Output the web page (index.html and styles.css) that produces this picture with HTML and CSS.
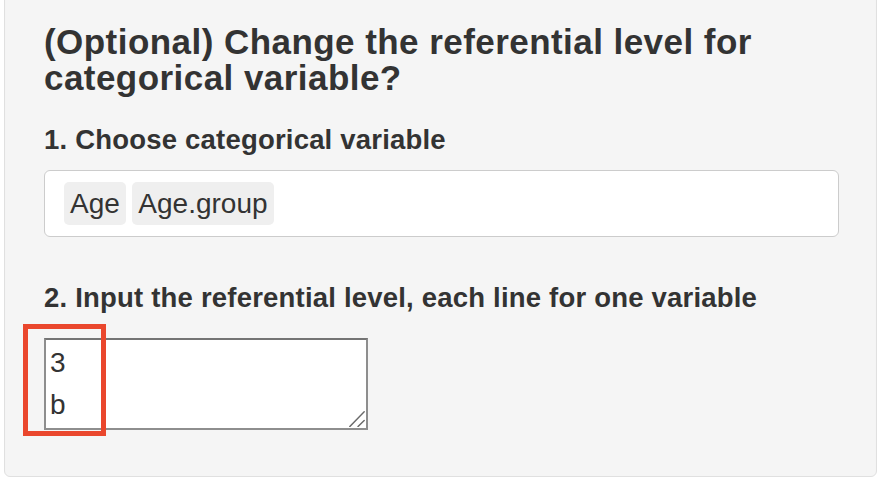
FILE: index.html
```html
<!DOCTYPE html>
<html lang="en">
<head>
<meta charset="utf-8">
<title>Referential level</title>
<link rel="stylesheet" href="styles.css">
</head>
<body>
<div class="well">
  <h4 class="title">(Optional) Change the referential level for categorical variable?</h4>
  <label class="field-label">1. Choose categorical variable</label>
  <div class="select-box">
    <span class="chip">Age</span>
    <span class="chip">Age.group</span>
  </div>
  <label class="field-label label-two">2. Input the referential level, each line for one variable</label>
  <div class="textarea-wrap">
    <textarea class="levels">3
b</textarea>
    <svg class="grip" width="16" height="16" viewBox="0 0 16 16" aria-hidden="true">
      <line x1="0.8" y1="15.6" x2="15.2" y2="0.8" />
      <line x1="9" y1="15.6" x2="15.2" y2="9.4" />
    </svg>
  </div>
</div>
<div class="highlight"></div>
</body>
</html>
```
FILE: styles.css
```css
html, body {
  margin: 0;
  padding: 0;
  background: #ffffff;
}

body {
  font-family: "Liberation Sans", Arial, Helvetica, sans-serif;
  color: #333333;
  position: relative;
  height: 488px;
  overflow: hidden;
}

.well {
  margin: -12px 7px 0 4px;
  padding: 35px 37px 46px 39px;
  background: #f5f5f5;
  border: 1px solid #e0e0e0;
  border-radius: 6px;
  box-shadow: inset 0 1px 1px rgba(0, 0, 0, 0.05);
  display: flex;
  flex-direction: column;
  align-items: flex-start;
}

.title {
  margin: 0;
  font-size: 35px;
  line-height: 36px;
  font-weight: bold;
  letter-spacing: 0.45px;
  color: #333333;
}

.field-label {
  display: block;
  margin: 25px 0 11px 0;
  font-size: 27.5px;
  line-height: 38px;
  font-weight: bold;
  letter-spacing: 0.2px;
}

.label-two {
  margin-top: 42px;
  margin-bottom: 21px;
}

.select-box {
  align-self: stretch;
  box-sizing: border-box;
  height: 67px;
  background: #ffffff;
  border: 1px solid #cccccc;
  border-radius: 6px;
  padding: 11px 18px 10px 19px;
  display: flex;
  gap: 6.5px;
  align-items: flex-start;
}

.chip {
  display: block;
  height: 43px;
  line-height: 43px;
  padding: 0 6px;
  background: #efefef;
  border-radius: 5px;
  font-size: 28px;
  color: #333333;
}

.textarea-wrap {
  position: relative;
  display: flex;
}

.levels {
  box-sizing: border-box;
  width: 324px;
  height: 92px;
  margin: 0;
  padding: 2px 4px;
  font-family: "Liberation Sans", Arial, Helvetica, sans-serif;
  font-size: 28px;
  line-height: 42px;
  color: #333333;
  background: #ffffff;
  border: 2px solid #8e8e8e;
  border-top-color: #747474;
  border-radius: 0;
  outline: none;
  resize: none;
}

.grip {
  position: absolute;
  right: 3px;
  bottom: 3px;
  stroke: #6a6a6a;
  stroke-width: 1.4;
  stroke-linecap: round;
}

.highlight {
  position: absolute;
  left: 23px;
  top: 324px;
  width: 83px;
  height: 112px;
  box-sizing: border-box;
  border: 5px solid #ea472d;
  pointer-events: none;
}
```
